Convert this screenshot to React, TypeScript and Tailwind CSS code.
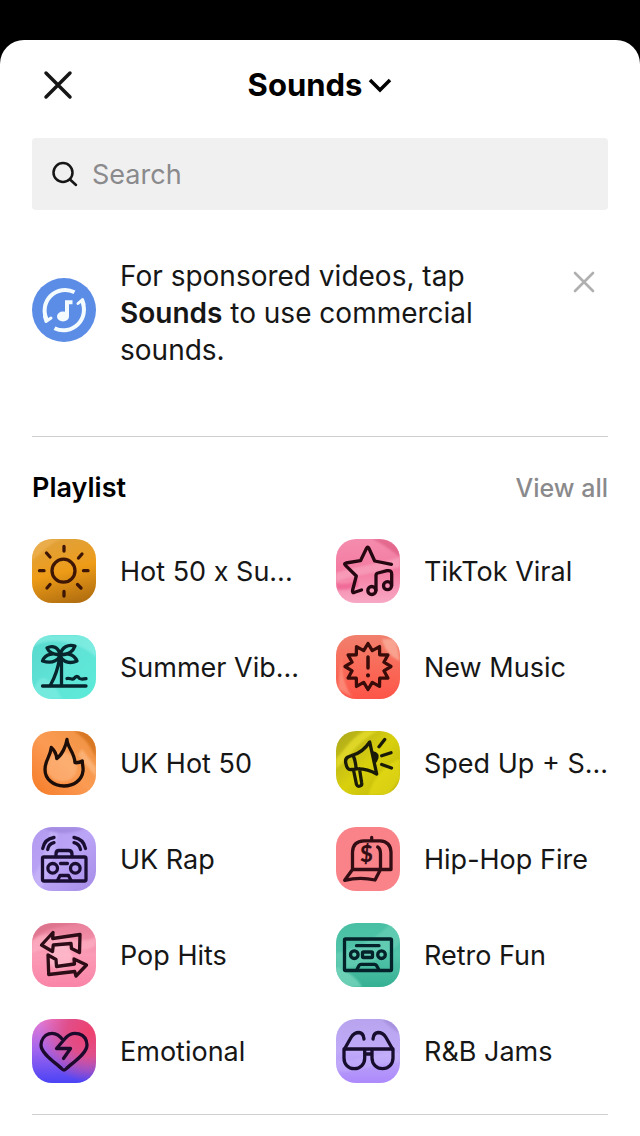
import { useState } from 'react';
import type { ReactNode } from 'react';
import { clsx } from 'clsx';

type Playlist = {
  name: string;
  tile: string;
  shine?: ReactNode;
  icon: ReactNode;
};

const burstPoints = Array.from({ length: 24 }, (_, i) => {
  const radius = i % 2 === 0 ? 23 : 16.5;
  const angle = (i * Math.PI) / 12 - Math.PI / 2;
  return `${(32 + radius * Math.cos(angle)).toFixed(1)},${(31.5 + radius * Math.sin(angle)).toFixed(1)}`;
}).join(' ');

const playlists: Playlist[] = [
  {
    name: 'Hot 50 x Su...',
    tile: 'bg-linear-165 from-[#dda23c] via-[#ee9c17] to-[#a9680f] text-[#3d1605]',
    shine: <path d="M0 22 C12 12 18 4 30 0 H0Z" fill="#f6bd63" opacity=".45" />,
    icon: (
      <>
        <circle cx="31.5" cy="31.7" r="11.5" />
        <path d="M32 7.5v4.5M32 52.5V57M7.5 31.7H12M51.5 31.7H56M14.5 14l3.5 4M50 15l-3.5 4M15 49l3-3.5M49 49l-3.5-3.5" />
      </>
    ),
  },
  {
    name: 'TikTok Viral',
    tile: 'bg-linear-to-b from-[#f48cae] via-[#f47ba2] to-[#f7a8c4] text-[#240710]',
    shine: (
      <>
        <path d="M0 34 C20 26 34 28 64 18 V28 C40 34 20 36 0 42Z" fill="#f9b4ca" opacity=".5" />
        <path d="M36 0 C46 4 56 12 64 18 V8 L50 0Z" fill="#d9547c" opacity=".6" />
        <path d="M0 44 C10 46 16 44 22 40 V48 C14 50 6 52 0 50Z" fill="#ee5c8d" opacity=".7" />
      </>
    ),
    icon: (
      <>
        <path d="M55.5 25.3 L38.7 22 L33 9.5 Q31.7 7 30.4 9.5 L24.5 21.7 L10 24 Q7.5 24.5 9.5 26.3 L20.3 37 L16.5 51.5 Q16 54.5 18.7 53.2 L25.5 51" />
        <circle cx="35.8" cy="51.5" r="4" />
        <circle cx="51.5" cy="46.7" r="4" />
        <path d="M40 51.5V36.5Q40 34.5 42 34L51 31.7Q55.7 31 55.7 35V46.7" />
      </>
    ),
  },
  {
    name: 'Summer Vib...',
    tile: 'bg-linear-to-br from-[#57d9cd] via-[#5fe3d6] to-[#5cebd9] text-[#06252c]',
    shine: (
      <>
        <path d="M0 12 C20 0 50 8 64 22 V0 H0Z" fill="#8ff2e7" opacity=".6" />
        <path d="M0 64 C4 36 16 36 30 64Z" fill="#93f2e8" opacity=".4" />
      </>
    ),
    icon: (
      <>
        <path d="M28 21C22 17 13 19 10.5 26C18 28.5 24 27 28 21.5M28 20C27 13 21 9.5 15 13C17 18 22 19.5 28 20M28 20C30 12 36 9 43 11C41 17 36 20 28 20M28 21C34 17 42 19 45 26C38 29 32 27 28 21.5" />
        <path d="M27.5 23C26 34 23 42 18.5 50M29.5 23V50M10.5 51H54M35 43.5C38 42.5 40 45.5 42 43.5Q45 39.5 47.5 43.5Q49 44.5 54 43.7" />
      </>
    ),
  },
  {
    name: 'New Music',
    tile: 'bg-linear-to-b from-[#f0806d] via-[#f96a58] to-[#fd5548] text-[#3a0c09]',
    shine: (
      <>
        <path d="M46 4 L60 4 L64 26 C54 22 48 14 46 4Z" fill="#fbc0ae" opacity=".6" />
        <path d="M6 14 C4 34 8 50 16 62 L2 54Z" fill="#fda28f" opacity=".6" />
      </>
    ),
    icon: (
      <>
        <polygon points={burstPoints} />
        <path d="M32 22V33" strokeWidth="3.5" />
        <path d="M32 40.3v.2" strokeWidth="4" />
      </>
    ),
  },
  {
    name: 'UK Hot 50',
    tile: 'bg-linear-to-tr from-[#f57a22] via-[#fb9b53] to-[#ee9240] text-[#1c0d08]',
    shine: (
      <>
        <circle cx="30" cy="36" r="15" fill="#fdc08e" opacity=".5" />
        <path d="M42 0 C52 6 60 16 64 28 V6 L54 0Z" fill="#d2701b" opacity=".8" />
        <path d="M46 24 L64 46 V36 L50 18Z" fill="#ffc99b" opacity=".5" />
      </>
    ),
    icon: (
      <path d="M35 8.5C35 16 42.5 21 43 31.7C46 32 48 31.5 50.3 30C50.3 34 51.5 37 51 40C50 49 42 55 32 55C21 55 13 48 13 38.5C13 29 18 27 19.3 16.5C22 19 24.5 23 24.7 27.5C30 24 34 15 35 8.5Z" />
    ),
  },
  {
    name: 'Sped Up + S...',
    tile: 'bg-linear-to-br from-[#aba719] via-[#d9d00d] to-[#bdb30b] text-[#191a08]',
    shine: (
      <>
        <path d="M0 38 C14 26 24 8 42 0 H28 C14 8 8 20 0 28Z" fill="#f1e834" opacity=".6" />
        <path d="M32 64 C38 44 52 32 64 28 V48 L52 64Z" fill="#f0e619" opacity=".5" />
      </>
    ),
    icon: (
      <>
        <path d="M33.7 11C29 18 24 22 17 24L12 26Q8.5 28 10 33Q11 39 15 38.5C24 37 32 38 40.7 43ZM17 24Q20 31 20 38M17.5 39L20.5 53.5Q21.5 56 24 55Q26.2 54.5 25.7 52L23.5 38" />
        <path d="M37.5 22Q43.5 23.5 39.5 30Z" fill="currentColor" />
        <path d="M43 15.7L48.7 8.5M45.7 24.7L55 21.7M45.7 33.5L55.5 37" />
      </>
    ),
  },
  {
    name: 'UK Rap',
    tile: 'bg-linear-to-br from-[#b39af0] via-[#bba5f6] to-[#a58be8] text-[#1a0e33]',
    shine: (
      <>
        <path d="M10 0 C24 10 44 6 56 0Z" fill="#9279d2" opacity=".5" />
        <path d="M0 50 C10 40 14 20 18 4 L26 6 C22 30 14 54 8 64Z" fill="#cdbefb" opacity=".5" />
      </>
    ),
    icon: (
      <>
        <rect x="10.5" y="30" width="43.5" height="24" rx="1.5" />
        <path d="M24 29.5V27Q24 23.5 27 23.5H36.5Q40 23.5 40 27V29.5M28.5 36.5H35.5M25.5 53.5L28 48.5H36.5L39 53.5" />
        <circle cx="20.7" cy="41.3" r="4.8" />
        <circle cx="43.3" cy="41.3" r="4.8" />
        <path d="M10.7 21.5Q12.5 12 22 10.5M15.7 22.5Q16.5 17 22 15.7M53.5 21.5Q51.5 12 42 10.5M48.5 22.5Q47.5 17 42 15.7" />
      </>
    ),
  },
  {
    name: 'Hip-Hop Fire',
    tile: 'bg-[#fa8389] text-[#330d14]',
    icon: (
      <>
        <path d="M16.5 42.5V25Q17 14 28 13.8H44Q54.5 14.5 55 25V42.5H45.500M35.7 13V10.5M16.5 42.5L8.7 53.3Q24 49.500 39 53L44.500 42.5ZM41.7 20Q44.5 21.500 44.5 27V42" />
        <text
          x="30.5"
          y="35"
          textAnchor="middle"
          fill="currentColor"
          stroke="none"
          className="font-['Lato',sans-serif] text-[22px] font-black"
        >
          $
        </text>
      </>
    ),
  },
  {
    name: 'Pop Hits',
    tile: 'bg-linear-to-b from-[#e8809a] via-[#fb9bb5] to-[#f984a8] text-[#2b0c17]',
    shine: (
      <>
        <path d="M0 18 C20 0 44 26 64 14 V22 C50 34 20 20 0 30Z" fill="#ffb5c8" opacity=".6" />
        <path d="M0 18 C12 4 30 4 44 0 H0Z" fill="#d56a86" opacity=".6" />
        <circle cx="28" cy="34" r="12" fill="#ffd0dc" opacity=".5" />
      </>
    ),
    icon: (
      <>
        <path d="M9.5 22L21 9.5L20.7 15.5L48 11.5L47.5 29.5L39.5 25.5L39 20.5L21.3 22L20.5 28.5Z" />
        <path d="M16 32L24 36.5L24.5 43.5L42.5 41L42 36L54.5 42L44 53L42.7 48.5L16.7 51.5Z" />
      </>
    ),
  },
  {
    name: 'Retro Fun',
    tile: 'bg-linear-to-b from-[#48bfa4] via-[#52c4a9] to-[#35b093] text-[#04222a]',
    shine: (
      <>
        <path d="M0 30 C20 26 44 14 54 0 H64 V20 C46 38 20 46 0 46Z" fill="#77d8bf" opacity=".45" />
        <path d="M0 44 C12 48 22 56 26 64 H0Z" fill="#8be1c9" opacity=".6" />
      </>
    ),
    icon: (
      <>
        <rect x="8.5" y="16" width="47" height="31.5" rx="1" />
        <path d="M20.5 22.7H43M20.7 47L23 42.5Q23.7 41.3 25 41.3H38.5Q39.7 41.3 40.5 42.5L43 47" />
        <circle cx="18.3" cy="31.7" r="3.8" />
        <circle cx="45.5" cy="31.7" r="3.8" />
        <rect x="26.5" y="29" width="10" height="5.5" rx="1" />
      </>
    ),
  },
  {
    name: 'Emotional',
    tile: 'bg-[radial-gradient(circle_at_90%_20%,#ee416e_0%,#e04e8a_30%,transparent_65%),linear-gradient(to_bottom,#e87bd0_0%,#a767ed_45%,#4b43f5_100%)] text-[#1c0a2c]',
    icon: (
      <path d="M31 21C22 9 9.5 15 9 26C9 35 24 44 29.5 49.5Q32 52.5 34.5 49.5C40 44 55 35 55 26C54.5 14 41 11 34 18.5Q31 22 24.5 29.5H38.5L31.5 39.5" />
    ),
  },
  {
    name: 'R&B Jams',
    tile: 'bg-linear-to-t from-[#ad89fb] via-[#bfaaf8] to-[#b8a4ee] text-[#170d2c]',
    shine: (
      <>
        <path d="M0 40 C20 46 44 30 64 34 V44 C44 42 20 56 0 52Z" fill="#d2c5fc" opacity=".3" />
        <path d="M46 0 C52 6 58 12 64 14 V0Z" fill="#9880d0" opacity=".5" />
      </>
    ),
    icon: (
      <>
        <path d="M8 30H28.7V39C28.7 45 24.5 49.7 18.3 49.7C12 49.7 8 45 8 39ZM36 30H57V39C57 45 52.5 49.7 46.5 49.7C40.5 49.7 36 45 36 39ZM28.7 30H36M28.7 35H36" />
        <path d="M8.5 30L15 18.5Q18 13.5 23 13.5Q27.5 14 28 20M56.5 30L50 18.5Q47 13.5 42 13.5Q37.5 14 37 20" />
      </>
    ),
  },
];

const CloseIcon = ({ className }: { className: string }) => (
  <svg viewBox="0 0 32 32" className={className} fill="none" stroke="currentColor" strokeWidth="3.5" strokeLinecap="round">
    <path d="M4 4 28 28M28 4 4 28" />
  </svg>
);

const SponsoredIcon = () => (
  <svg viewBox="0 0 64 64" className="size-16 shrink-0" fill="none" stroke="#f3fbff" strokeWidth="4" aria-hidden="true">
    <circle cx="32" cy="32" r="32" fill="#5c8de6" stroke="none" />
    <path d="M42.5 14.2A20.5 20.5 0 0 0 15 42" />
    <path d="M12.5 38.5L14 43.5L19 40" strokeWidth="3" strokeLinejoin="round" strokeLinecap="round" />
    <path d="M22.5 50.2A20.5 20.5 0 0 0 50 23" />
    <path d="M46 25.5L50.5 21.5L52 26" strokeWidth="3" strokeLinejoin="round" strokeLinecap="round" />
    <path d="M35 39V24.2H40.5" />
    <ellipse cx="31" cy="38.5" rx="6" ry="5" fill="#f3fbff" stroke="none" />
  </svg>
);

const PlaylistItem = ({ playlist }: { playlist: Playlist }) => (
  <li className="min-w-0">
    <button type="button" className="flex w-full items-center gap-6 text-left">
      <svg
        viewBox="0 0 64 64"
        className={clsx('size-16 shrink-0 rounded-[20px]', playlist.tile)}
        fill="none"
        aria-hidden="true"
      >
        <g className="blur-[1px]">{playlist.shine}</g>
        <g stroke="currentColor" strokeWidth="3.3" strokeLinecap="round" strokeLinejoin="round">
          {playlist.icon}
        </g>
      </svg>
      <span className="pt-0.5 text-[27px] leading-9 whitespace-nowrap">{playlist.name}</span>
    </button>
  </li>
);

export default function App() {
  const [query, setQuery] = useState('');
  const [showNotice, setShowNotice] = useState(true);

  return (
    <div className="flex min-h-screen flex-col bg-black pt-10 font-['Inter',sans-serif] text-[#161616]">
      <main className="flex-1 rounded-t-3xl bg-white px-8">
        <header className="grid h-[90px] grid-cols-[1fr_auto_1fr] items-center">
          <button type="button" aria-label="Close" className="justify-self-start p-2.5">
            <CloseIcon className="size-8" />
          </button>
          <button type="button" className="flex items-center gap-1.5 text-black">
            <h1 className="text-[31px] leading-9 font-bold">Sounds</h1>
            <svg viewBox="0 0 24 16" className="w-6" fill="none" stroke="currentColor" strokeWidth="3.5" aria-hidden="true">
              <path d="M2 3 12 13 22 3" />
            </svg>
          </button>
        </header>

        <label className="mt-2 flex h-[72px] items-center gap-3.5 rounded-sm bg-[#f0f0f1] px-5">
          <svg viewBox="0 0 26 26" className="size-[26px] shrink-0" fill="none" stroke="currentColor" strokeWidth="2.5" strokeLinecap="round" aria-hidden="true">
            <circle cx="11" cy="11.5" r="9.5" />
            <path d="M18 18.5 24 24" />
          </svg>
          <input
            type="text"
            aria-label="Search"
            placeholder="Search"
            value={query}
            onChange={(e) => setQuery(e.target.value)}
            className="min-w-0 flex-1 bg-transparent pt-0.5 text-[27px] leading-9 outline-none placeholder:text-[#8a8a8c]"
          />
        </label>

        {showNotice && (
          <section className="flex items-start gap-6 border-b border-[#cfcfcf] pt-12 pb-[67px]">
            <div className="pt-5">
              <SponsoredIcon />
            </div>
            <p className="max-w-[370px] flex-1 text-[28px] leading-[37px]">
              For sponsored videos, tap <strong className="font-semibold">Sounds</strong> to use commercial sounds.
            </p>
            <button
              type="button"
              aria-label="Dismiss"
              onClick={() => setShowNotice(false)}
              className="ml-auto p-3 text-[#b0b0b0]"
            >
              <CloseIcon className="size-6" />
            </button>
          </section>
        )}

        <section className="border-b border-[#cfcfcf] pb-[31px]">
          <div className="flex h-[102px] items-center justify-between">
            <h2 className="text-[27px] leading-9 font-semibold text-black">Playlist</h2>
            <a href="#playlists" className="text-[25px] leading-9 font-medium text-[#8a8a8c]">
              View all
            </a>
          </div>
          <ul className="grid grid-cols-2 gap-8">
            {playlists.map((playlist) => (
              <PlaylistItem key={playlist.name} playlist={playlist} />
            ))}
          </ul>
        </section>
      </main>
    </div>
  );
}
